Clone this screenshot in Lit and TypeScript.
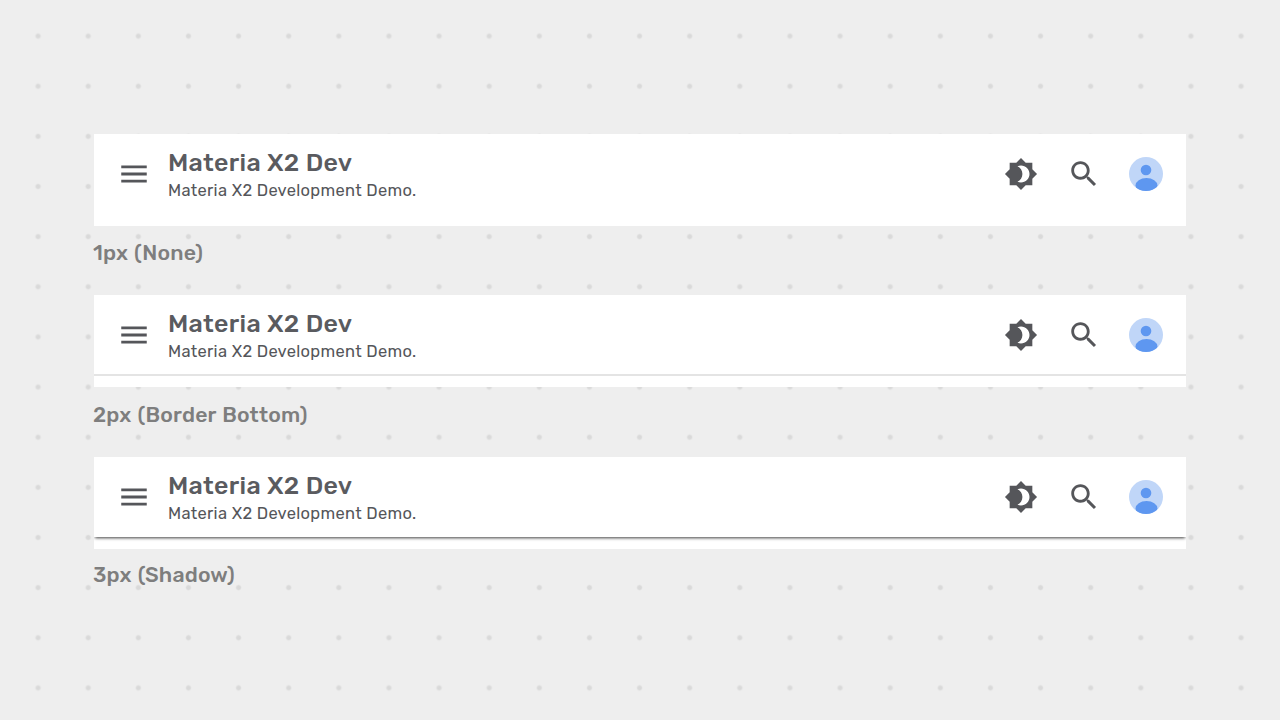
import { LitElement, html, css, svg } from "lit";
import { customElement } from "lit/decorators.js";

const bright = svg`<path d="M20 8.69V4h-4.69L12 .69 8.69 4H4v4.69L.69 12 4 15.31V20h4.69L12 23.31 15.31 20H20v-4.69L23.31 12 20 8.69zM12 18c-.89 0-1.74-.2-2.5-.55C11.56 16.5 13 14.42 13 12s-1.44-4.5-3.5-5.45C10.26 6.2 11.11 6 12 6c3.31 0 6 2.69 6 6s-2.69 6-6 6z"/>`;
const search = svg`<path d="M15.5 14h-.79l-.28-.27C15.41 12.59 16 11.11 16 9.5 16 5.91 13.09 3 9.5 3S3 5.91 3 9.5 5.91 16 9.5 16c1.61 0 3.09-.59 4.23-1.57l.27.28v.79l5 4.99L20.49 19l-4.99-5zm-6 0C7.01 14 5 11.99 5 9.5S7.01 5 9.5 5 14 7.01 14 9.5 11.99 14 9.5 14z"/>`;
const menu = svg`<path d="M3 18h18v-2H3v2zm0-5h18v-2H3v2zm0-7v2h18V6H3z"/>`;

const bars = [
  { label: "1px (None)", kind: "none", cls: "l1" },
  { label: "2px (Border Bottom)", kind: "border", cls: "l2" },
  { label: "3px (Shadow)", kind: "shadow", cls: "l3" },
];

@customElement("app-root")
export class AppRoot extends LitElement {
  static styles = css`
    :host {
      display: block;
      width: 1280px;
      height: 720px;
      overflow: hidden;
      box-sizing: border-box;
      padding: 134px 94px 0;
      background-color: #eeeeee;
      background-image: radial-gradient(circle, #d9d9d9 0, #dadada 1.8px, rgba(238, 238, 238, 0) 3.2px);
      background-size: 50.13px 50.15px;
      background-position: 13px 11px;
      font-family: Rubik, Roboto, "Liberation Sans", sans-serif;
    }
    .card {
      background: #fff;
      height: 92px;
    }
    .bar {
      height: 80px;
      box-sizing: border-box;
      display: flex;
      align-items: center;
      padding: 0 23px;
      color: #5a5b5f;
    }
    .border .bar {
      height: 81px;
      padding-top: 1px;
      border-bottom: 2px solid #e4e4e4;
    }
    .shadow .bar {
      height: 80px;
      box-shadow: 0 2px 3px -1px rgba(0, 0, 0, 0.75);
      clip-path: inset(0 0 -6px 0);
    }
    svg.icon {
      width: 34px;
      height: 34px;
      display: block;
      fill: #55565a;
      flex: none;
    }
    .titles {
      margin-left: 17px;
      flex: 1;
      display: flex;
      flex-direction: column;
      padding-top: 2px;
    }
    .title {
      font-size: 25px;
      line-height: 30px;
      font-weight: 500;
      letter-spacing: 0.3px;
    }
    .sub {
      font-size: 16.5px;
      line-height: 22px;
      margin-top: 2px;
      letter-spacing: 0.3px;
      color: #55565a;
    }
    .actions {
      display: flex;
      align-items: center;
      gap: 28.5px;
    }
    .label {
      box-sizing: border-box;
      margin-left: -1px;
      font-size: 21.3px;
      line-height: 26px;
      font-weight: 500;
      letter-spacing: 0.15px;
      word-spacing: 1px;
      color: #7e7e7e;
    }
    .l1 { height: 69px; padding-top: 14px; }
    .l2 { height: 70px; padding-top: 15px; }
    .l3 { height: 70px; padding-top: 13px; }
    .avatar circle.bg { fill: #c0d6f8; }
    .avatar .fg { fill: #5e97f0; }
  `;

  private icon(p: unknown) {
    return html`<svg class="icon" viewBox="0 0 24 24">${p}</svg>`;
  }

  render() {
    return bars.map(
      (b, i) => html`
        <div class="card ${b.kind}">
          <div class="bar">
            ${this.icon(menu)}
            <div class="titles">
              <div class="title">Materia X2 Dev</div>
              <div class="sub">Materia X2 Development Demo.</div>
            </div>
            <div class="actions">
              ${this.icon(bright)} ${this.icon(search)}
              <svg class="avatar" width="34" height="34" viewBox="0 0 34 34">
                <defs><clipPath id="c${i}"><circle cx="17" cy="17" r="17"></circle></clipPath></defs>
                <circle class="bg" cx="17" cy="17" r="17"></circle>
                <circle class="fg" cx="17" cy="13" r="5.3"></circle>
                <ellipse class="fg" cx="17.5" cy="28.5" rx="11" ry="7.5" clip-path="url(#c${i})"></ellipse>
              </svg>
            </div>
          </div>
        </div>
        <div class="label ${b.cls}">${b.label}</div>
      `
    );
  }
}
